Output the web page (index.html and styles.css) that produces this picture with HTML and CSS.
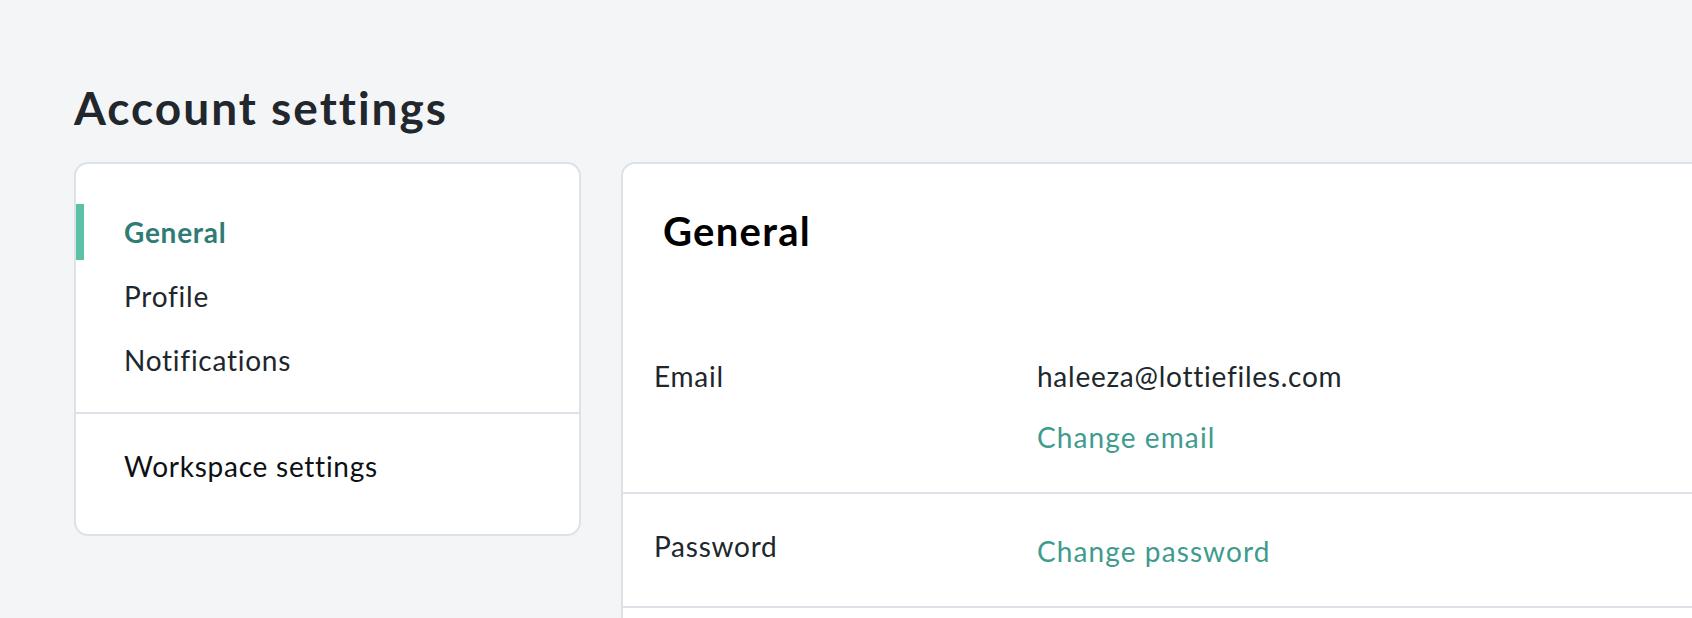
FILE: index.html
```html
<!DOCTYPE html>
<html lang="en">
<head>
<meta charset="utf-8">
<title>Account settings</title>
<link rel="stylesheet" href="styles.css">
</head>
<body>
<div class="page">
  <h1 class="page-title">Account settings</h1>
  <div class="layout">
    <nav class="sidebar">
      <ul class="menu">
        <li class="menu-item active">General</li>
        <li class="menu-item">Profile</li>
        <li class="menu-item">Notifications</li>
      </ul>
      <ul class="menu menu-bottom">
        <li class="menu-item strong">Workspace settings</li>
      </ul>
    </nav>
    <section class="panel">
      <header class="panel-head">
        <h2 class="panel-title">General</h2>
      </header>
      <div class="row">
        <div class="label">Email</div>
        <div class="value">
          <div class="text">haleeza@lottiefiles.com</div>
          <a class="link link-gap">Change email</a>
        </div>
      </div>
      <div class="row">
        <div class="label">Password</div>
        <div class="value">
          <a class="link">Change password</a>
        </div>
      </div>
    </section>
  </div>
</div>
</body>
</html>
```

FILE: styles.css
```css
* { box-sizing: border-box; }
html, body {
  margin: 0;
  padding: 0;
  background: #f4f5f7;
  overflow: hidden;
}
body {
  font-family: Lato, "Noto Sans", sans-serif;
  color: #20272c;
}
.page {
  padding: 80px 0 0 74px;
  width: 1760px;
  height: 618px;
  overflow: hidden;
}
.page-title {
  margin: 0 0 26px 0;
  font-size: 46px;
  line-height: 56px;
  font-weight: 700;
  letter-spacing: 2px;
  color: #21272c;
}
.layout {
  display: flex;
  align-items: flex-start;
  gap: 40px;
}
.sidebar {
  width: 507px;
  flex: 0 0 507px;
  background: #fff;
  border: 2px solid #dde2e8;
  border-radius: 14px;
  overflow: hidden;
}
.menu {
  list-style: none;
  margin: 0;
  padding: 40px 0 24px 0;
  display: flex;
  flex-direction: column;
  gap: 8px;
  border-bottom: 2px solid #dde2e8;
}
.menu-bottom {
  padding: 24px 0 40px 0;
  border-bottom: none;
}
.menu-item {
  position: relative;
  height: 56px;
  display: flex;
  align-items: center;
  padding-left: 48px;
  font-size: 28px;
  letter-spacing: 0.75px;
  color: #20272c;
}
.menu-item.active {
  color: #2f7c75;
  font-weight: 700;
}
.menu-item.active::before {
  content: "";
  position: absolute;
  left: 0;
  top: 0;
  width: 8px;
  height: 56px;
  background: #5bc0a5;
}
.menu-item.strong { color: #0d1114; }
.panel {
  flex: 1 1 auto;
  background: #fff;
  border: 2px solid #dde2e8;
  border-right: none;
  border-radius: 14px 0 0 0;
  min-height: 600px;
}
.panel-head {
  padding: 43px 40px 69px 40px;
}
.panel-title {
  margin: 0;
  font-size: 40px;
  line-height: 48px;
  font-weight: 700;
  letter-spacing: 1.3px;
  color: #000;
}
.row {
  display: grid;
  grid-template-columns: 383px 1fr;
  padding: 32px 0 30px 31px;
  border-bottom: 2px solid #dde2e8;
  font-size: 28px;
  line-height: 40px;
  letter-spacing: 0.75px;
}
.label { color: #20272c; }
.value {
  display: flex;
  flex-direction: column;
  align-items: flex-start;
}
.text { color: #20272c; }
.link {
  display: inline-block;
  padding: 5px 0;
  color: #3e9b8d;
  letter-spacing: 1.1px;
  text-decoration: none;
  cursor: pointer;
}
.link-gap { margin-top: 16px; }
```
